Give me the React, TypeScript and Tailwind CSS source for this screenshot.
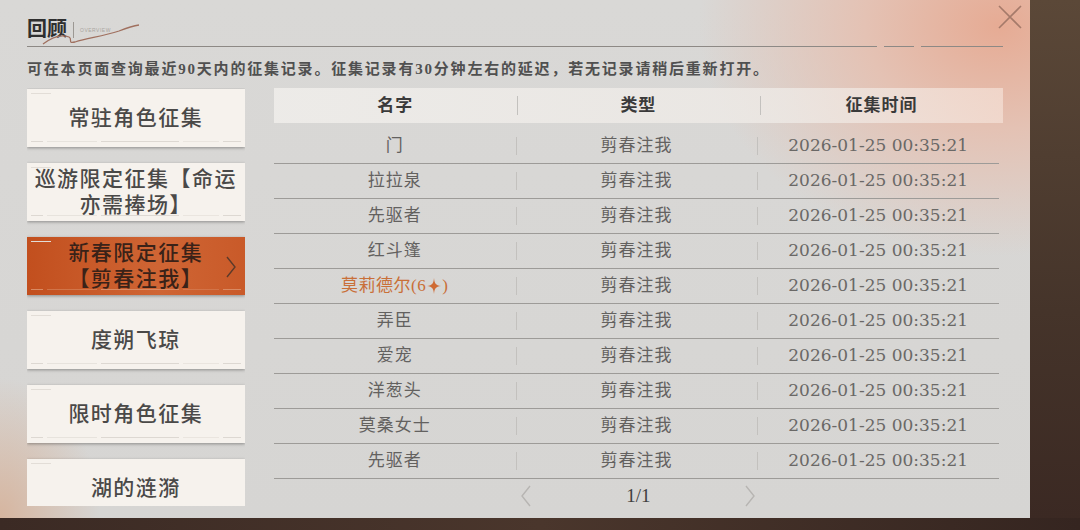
import { ReactNode } from "react";

const rows = [
  { name: "门" },
  { name: "拉拉泉" },
  { name: "先驱者" },
  { name: "红斗篷" },
  { name: "莫莉德尔(6", star: true },
  { name: "弄臣" },
  { name: "爱宠" },
  { name: "洋葱头" },
  { name: "莫桑女士" },
  { name: "先驱者" },
];

const tabs = [
  { lines: ["常驻角色征集"] },
  { lines: ["巡游限定征集【命运", "亦需捧场】"] },
  { lines: ["新春限定征集", "【剪春注我】"], active: true },
  { lines: ["度朔飞琼"] },
  { lines: ["限时角色征集"] },
  { lines: ["湖的涟漪"] },
];

const serif = "font-['Liberation_Serif','Noto_Sans_CJK_SC',serif]";
const digits = "font-['DejaVu_Serif','Noto_Sans_CJK_SC',serif]";

function Chevron({ dir, className }: { dir: "left" | "right"; className?: string }) {
  return (
    <svg width="12" height="22" viewBox="0 0 12 22" className={className}>
      <path
        d={dir === "left" ? "M10 1 L2 11 L10 21" : "M2 1 L10 11 L2 21"}
        fill="none"
        stroke="currentColor"
        strokeWidth="1.4"
      />
    </svg>
  );
}

function Tab({ lines, active }: { lines: string[]; active?: boolean }) {
  const line = active ? "bg-[#d98a63]" : "bg-[#ddd8d2]";
  return (
    <div
      className={`relative h-[58px] shrink-0 flex items-center justify-center shadow-[0_1px_3px_rgba(0,0,0,0.35)] ${
        active
          ? "bg-[linear-gradient(90deg,#c24f1e,#cf6534_60%,#c95a29)] text-[#3a2218]"
          : "bg-[#f6f2ed] text-[#4a4948]"
      }`}
    >
      {/* faint decorative rule along the bottom */}
      <div className="absolute left-[4px] right-[4px] bottom-[5px] flex items-center gap-[4px]">
        <div className={`h-px w-[12px] ${line}`} />
        <div className={`h-px w-[50px] opacity-60 ${line}`} />
        <div className={`h-px flex-1 ${line}`} />
        <div className={`h-px w-[36px] opacity-50 ${line}`} />
        <div className={`h-px w-[18px] ${line}`} />
      </div>
      <div className="absolute left-[4px] top-[4px] h-px w-[20px] bg-[#e2ddd7]" />
      <div className={`${serif} text-[21px] font-medium leading-[26px] tracking-[1.5px] text-center`}>
        {lines.map((l) => (
          <div key={l} className="whitespace-nowrap">
            {l}
          </div>
        ))}
      </div>
      {active && (
        <Chevron dir="right" className="absolute right-[8px] top-[19px] text-[#5c3a2a]" />
      )}
    </div>
  );
}

function Cell({ children, divider }: { children: ReactNode; divider?: boolean }) {
  return (
    <div className="relative flex-1 h-full flex items-center justify-center">
      {divider && <div className="absolute left-0 top-[8px] bottom-[8px] w-px bg-[#c3c1be]" />}
      {children}
    </div>
  );
}

export default function App() {
  return (
    <div className="w-[1080px] h-[530px] overflow-hidden flex flex-col bg-[#3a2822]">
      <div className="flex h-[518px]">
        <div className="relative w-[1030px] h-full bg-[radial-gradient(ellipse_300px_230px_at_97%_5%,#e6ab94_0%,#e4c2b4_45%,rgba(216,215,213,0)_100%),radial-gradient(ellipse_100px_140px_at_0%_100%,#d6b59f_0%,rgba(216,215,213,0)_100%),linear-gradient(#d9d8d6,#d6d5d3)] px-[27px]">
          {/* title */}
          <div className="relative h-[46px] flex items-end pb-[6px] gap-[6px]">
            <div className={`${serif} text-[20px] font-bold text-[#2f2f2f] leading-[22px]`}>回顾</div>
            <div className="w-px h-[16px] bg-[#9c9893] mb-[2px]" />
            <div className="text-[5px] tracking-[0.5px] text-[#a9a5a0] mb-[6px] font-['Liberation_Sans',sans-serif]">
              OVERVIEW
            </div>
            <svg
              width="100"
              height="24"
              viewBox="0 0 100 24"
              className="absolute left-[14px] top-[22px]"
            >
              <path
                d="M2 22 C10 16 20 12 28 15 C32 17 26 22 34 20 C48 16 62 14 78 9 C86 6 92 4 98 3"
                fill="none"
                stroke="#a0705f"
                strokeWidth="1.3"
              />
            </svg>
          </div>
          <div className="flex items-center gap-[7px]">
            <div className="h-px flex-1 bg-[#8d8985]" />
            <div className="h-px w-[30px] bg-[#8d8985]" />
            <div className="h-px w-[82px] bg-[#8d8985]" />
          </div>
          <svg
            width="26"
            height="26"
            viewBox="0 0 26 26"
            className="absolute right-[7px] top-[4px]"
          >
            <path d="M2 2 L24 24 M24 2 L2 24" stroke="#a57a6a" strokeWidth="1.6" />
          </svg>

          {/* note */}
          <div
            className={`${serif} mt-[12px] text-[15px] leading-[20px] tracking-[1.8px] font-bold text-[#505050]`}
          >
            可在本页面查询最近90天内的征集记录。征集记录有30分钟左右的延迟，若无记录请稍后重新打开。
          </div>

          <div className="mt-[9px] flex gap-[29px]">
            {/* tabs */}
            <div className="w-[218px] h-[418px] overflow-hidden flex flex-col gap-[16px] pt-px">
              {tabs.map((t) => (
                <Tab key={t.lines[0]} lines={t.lines} active={t.active} />
              ))}
            </div>

            {/* table */}
            <div className="w-[730px] flex flex-col">
              <div
                className={`${serif} h-[35px] flex font-bold text-[17px] tracking-[1px] text-[#3a3a3a] bg-[linear-gradient(90deg,rgba(240,238,235,0.85),rgba(238,234,230,0.8)_70%,rgba(245,225,215,0.7))]`}
              >
                <Cell>名字</Cell>
                <Cell divider>类型</Cell>
                <Cell divider>征集时间</Cell>
              </div>
              <div className="h-[6px]" />
              {rows.map((r, i) => (
                <div
                  key={i}
                  className="h-[35px] flex border-b-[1.5px] border-[#9d9b98] text-[17px] text-[#63615f] mr-[4px]"
                >
                  <Cell>
                    {r.star ? (
                      <span className={`${serif} text-[#c96f38] tracking-[0.5px] flex items-center`}>
                        {r.name}
                        <svg width="14" height="16" viewBox="0 0 14 16" className="mx-[1px]">
                          <path
                            d="M7 0 C7.6 5.5 8.5 7.2 14 8 C8.5 8.8 7.6 10.5 7 16 C6.4 10.5 5.5 8.8 0 8 C5.5 7.2 6.4 5.5 7 0 Z"
                            fill="#cf6a33"
                          />
                        </svg>
                        )
                      </span>
                    ) : (
                      <span className={`${serif} tracking-[1px]`}>{r.name}</span>
                    )}
                  </Cell>
                  <Cell divider>
                    <span className={`${serif} tracking-[1px]`}>剪春注我</span>
                  </Cell>
                  <Cell divider>
                    <span className={`${digits} text-[17px] text-[#6a6866]`}>2026-01-25 00:35:21</span>
                  </Cell>
                </div>
              ))}
              <div className="h-[34px] flex items-center">
                <div className="flex-1" />
                <div className="w-[244px] flex items-center justify-between px-[4px]">
                  <Chevron dir="left" className="text-[#b7b5b2]" />
                  <span className={`${serif} text-[19px] text-[#404040]`}>1/1</span>
                  <Chevron dir="right" className="text-[#b7b5b2]" />
                </div>
                <div className="flex-1" />
              </div>
            </div>
          </div>
        </div>
        <div className="flex-1 h-full bg-[linear-gradient(#5b4838,#45342a_60%,#3b2923)]" />
      </div>
      <div className="flex-1 bg-[linear-gradient(90deg,#3b2a24,#4a362c_50%,#352520)]" />
    </div>
  );
}
